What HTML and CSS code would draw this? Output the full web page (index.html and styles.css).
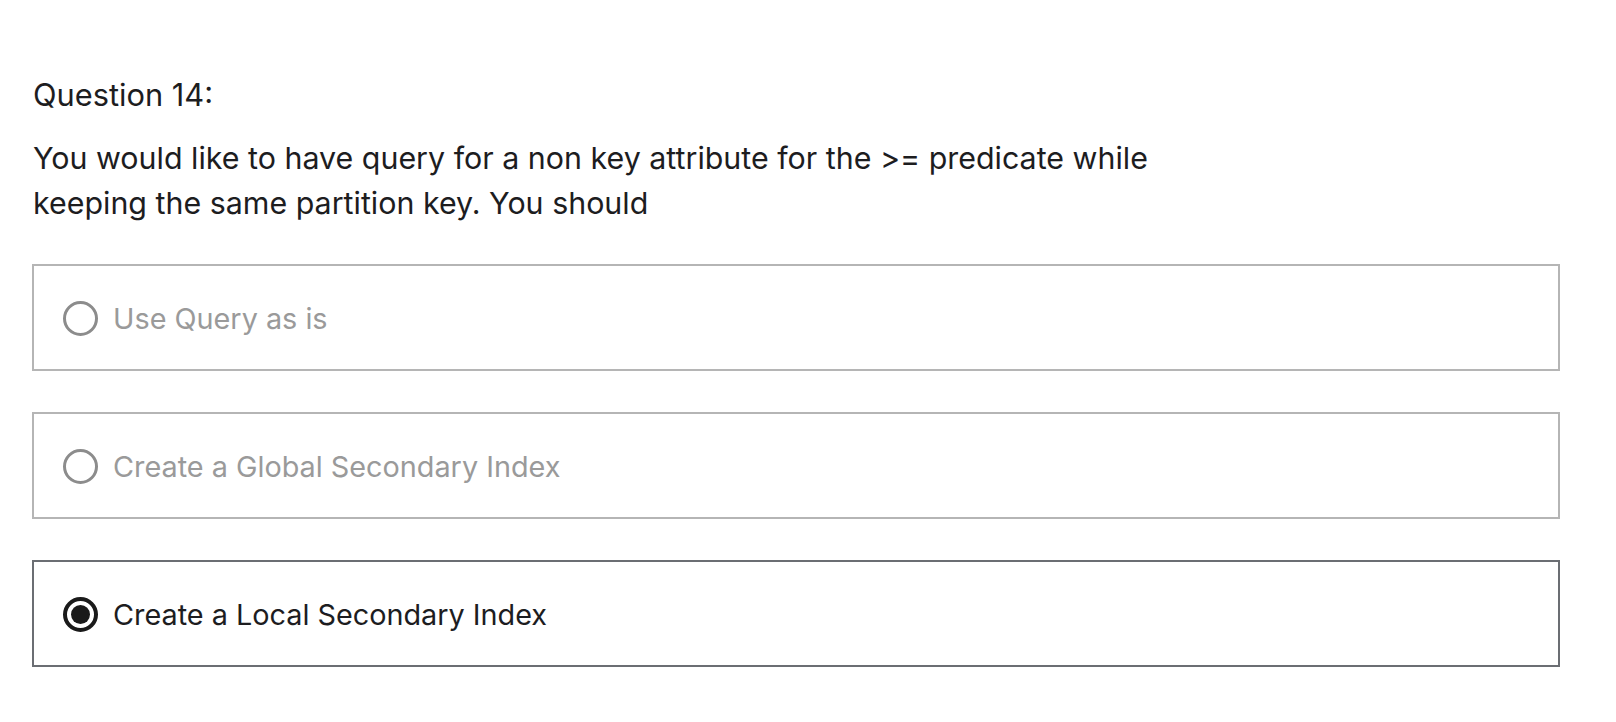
FILE: index.html
```html
<!DOCTYPE html>
<html lang="en">
<head>
<meta charset="utf-8">
<title>Question 14</title>
<link rel="stylesheet" href="styles.css">
</head>
<body>
<main class="quiz">
  <p class="q-label">Question 14:</p>
  <p class="q-text">You would like to have query for a non key attribute for the &gt;= predicate while<br>keeping the same partition key. You should</p>
  <div class="options">
    <label class="option">
      <span class="radio"></span>
      <span class="opt-text">Use Query as is</span>
    </label>
    <label class="option">
      <span class="radio"></span>
      <span class="opt-text">Create a Global Secondary Index</span>
    </label>
    <label class="option selected">
      <span class="radio"></span>
      <span class="opt-text">Create a Local Secondary Index</span>
    </label>
  </div>
</main>
</body>
</html>
```

FILE: styles.css
```css
html, body {
  margin: 0;
  padding: 0;
  background: #ffffff;
}

body {
  font-family: Inter, "Noto Sans", "Liberation Sans", sans-serif;
  color: #1d1d1f;
}

.quiz {
  padding: 73px 56px 0 33px;
}

.q-label {
  margin: 0;
  font-size: 30.8px;
  line-height: 43px;
}

.q-text {
  margin: 20px 0 0 0;
  font-size: 30.4px;
  line-height: 45px;
}

.options {
  display: flex;
  flex-direction: column;
  gap: 41px;
  margin-top: 38px;
  margin-left: -1px;
}

.option {
  display: flex;
  align-items: center;
  gap: 15px;
  height: 107px;
  box-sizing: border-box;
  border: 2px solid #b5b5b5;
  padding-left: 29px;
  padding-top: 2px;
  color: #9a9a9a;
  font-size: 28.8px;
  line-height: 42px;
}

.radio {
  width: 35px;
  height: 35px;
  box-sizing: border-box;
  border-radius: 50%;
  border: 3px solid #8c8c8c;
  flex: none;
  display: flex;
  align-items: center;
  justify-content: center;
}

.option.selected {
  border-color: #6b6e73;
  color: #1d1d1f;
}

.option.selected .radio {
  border: 4px solid #1a1a1a;
}

.option.selected .radio::after {
  content: "";
  width: 19px;
  height: 19px;
  border-radius: 50%;
  background: #1a1a1a;
}
```
